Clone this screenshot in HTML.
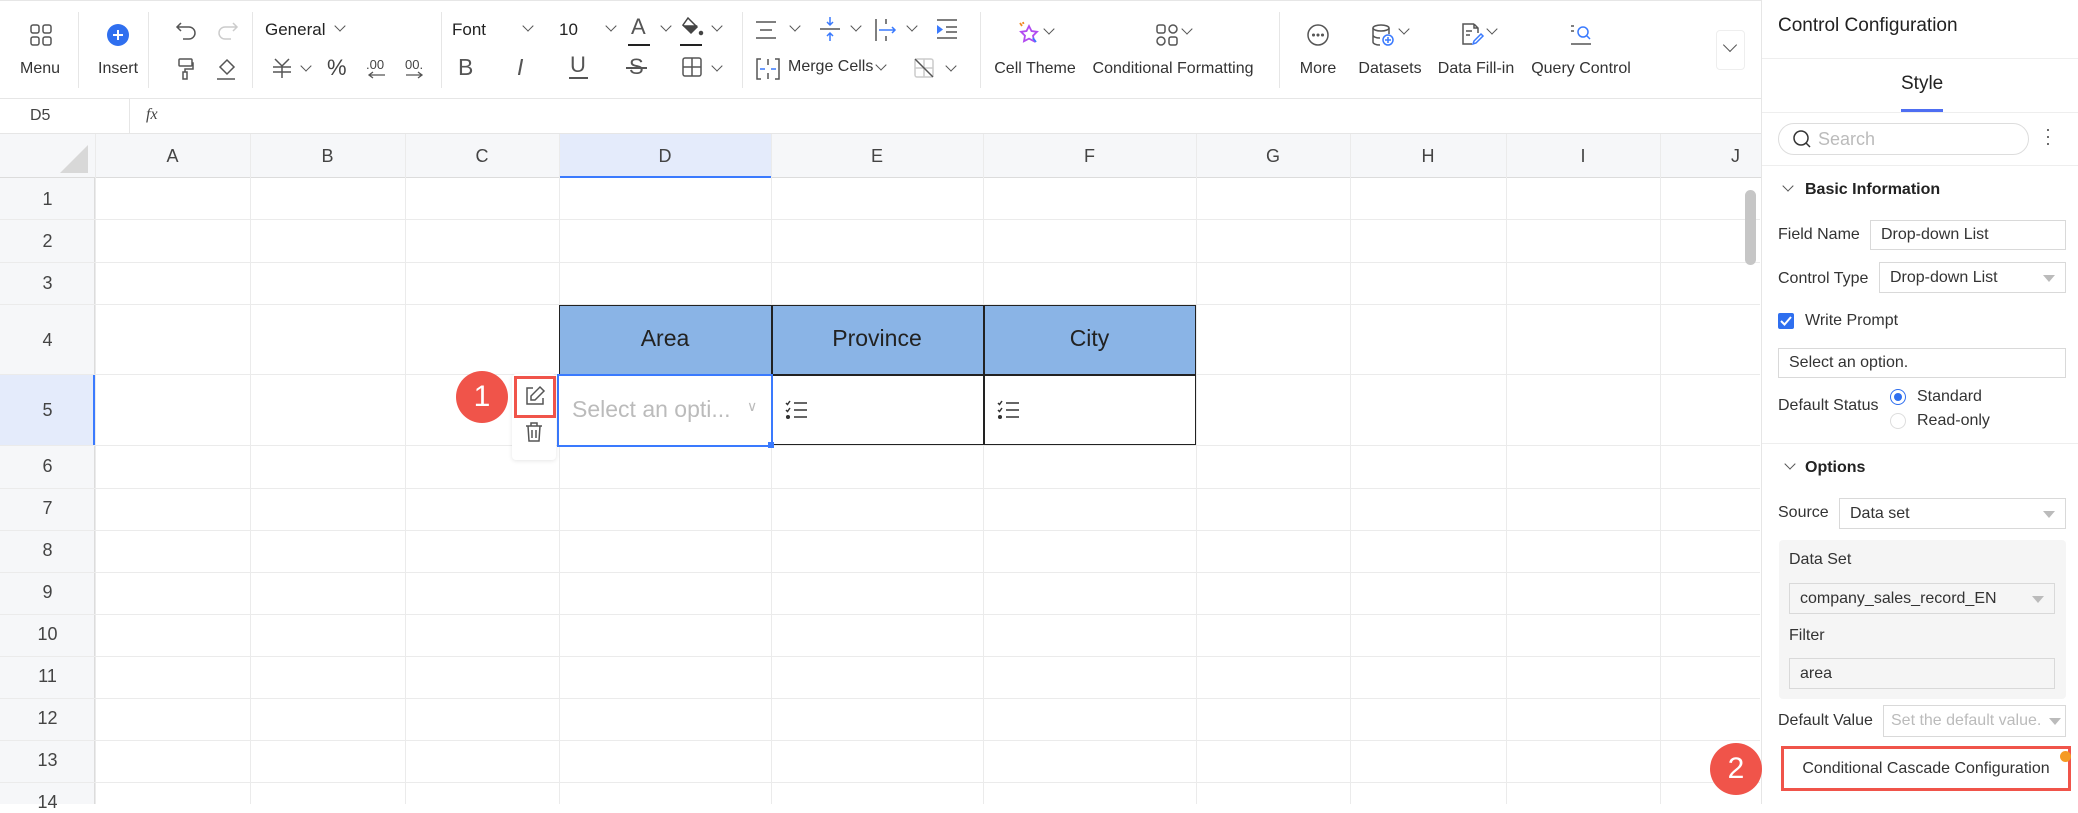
<!DOCTYPE html>
<html><head><meta charset="utf-8"><style>
*{box-sizing:border-box;margin:0;padding:0}
body{width:2078px;height:804px;overflow:hidden;background:#fff;font-family:"Liberation Sans",Arial,sans-serif;color:#333;position:relative}
.a{position:absolute}
.lbl{position:absolute;font-size:16px;color:#333;white-space:nowrap;transform:translateX(-50%)}
.vd{position:absolute;top:12px;width:1px;height:76px;background:#e6e6e6}
svg{position:absolute;overflow:visible}
.ch{position:absolute;width:8px;height:8px;border-right:1.5px solid #555;border-bottom:1.5px solid #555;transform:rotate(45deg)}
.hl{position:absolute;left:0;width:1760px;height:1px;background:#ebebeb}
.vl{position:absolute;top:134px;width:1px;height:670px;background:#ebebeb}
.ch-h{position:absolute;top:134px;height:44px;line-height:44px;text-align:center;font-size:18px;color:#444}
.rn{position:absolute;left:0;width:95px;text-align:center;font-size:18px;color:#444}
.p{position:absolute;font-size:16px;color:#333;white-space:nowrap}
.box{position:absolute;border:1px solid #d9d9d9;background:#fff;font-size:16px;color:#333;padding-left:10px;display:flex;align-items:center;white-space:nowrap}
.tri{position:absolute;right:10px;top:50%;margin-top:-3px;border-left:6px solid transparent;border-right:6px solid transparent;border-top:7px solid #bbb}
</style></head><body>

<!-- toolbar -->
<div class="a" style="left:0;top:0;width:1762px;height:99px;border-bottom:1px solid #e6e6e6;border-top:1px solid #e6e6e6"></div>
<svg style="left:30px;top:24px" width="22" height="22" fill="none" stroke="#555" stroke-width="1.5"><rect x="1" y="1" width="8" height="8" rx="2"/><rect x="13" y="1" width="8" height="8" rx="2"/><rect x="1" y="13" width="8" height="8" rx="2"/><rect x="13" y="13" width="8" height="8" rx="2"/></svg>
<div class="lbl" style="left:40px;top:60px">Menu</div>
<div class="vd" style="left:78px"></div>
<svg style="left:107px;top:24px" width="22" height="22"><circle cx="11" cy="11" r="11" fill="#2f6fef"/><path d="M11 6v10M6 11h10" stroke="#fff" stroke-width="2"/></svg>
<div class="lbl" style="left:118px;top:60px">Insert</div>
<div class="vd" style="left:148px"></div>
<svg style="left:176px;top:20px" width="22" height="20" fill="none" stroke="#555" stroke-width="1.5"><path d="M5 3L1 7l4 4M1 7h12a6 6 0 010 12H7"/></svg>
<svg style="left:216px;top:20px" width="22" height="20" fill="none" stroke="#ccc" stroke-width="1.5"><path d="M17 3l4 4-4 4M21 7H9a6 6 0 000 12h6"/></svg>
<svg style="left:178px;top:58px" width="16" height="22" fill="none" stroke="#555" stroke-width="1.5"><rect x="1" y="1" width="13" height="7" rx="1"/><path d="M14 5h1v6H7v3"/><rect x="5" y="14" width="4" height="7"/></svg>
<svg style="left:216px;top:58px" width="20" height="22" fill="none" stroke="#555" stroke-width="1.5"><path d="M11 2l7 7-7 7-7-7z"/><path d="M1 21h18"/></svg>
<div class="vd" style="left:252px"></div>
<div class="p" style="left:265px;top:20px;font-size:17px;color:#222">General</div>
<div class="ch" style="left:336px;top:22px"></div>
<svg style="left:272px;top:58px" width="20" height="20" fill="none" stroke="#555" stroke-width="1.5"><path d="M3 1l7 7 7-7M1 9h18M1 14h18M10 8v12"/></svg>
<div class="ch" style="left:302px;top:62px"></div>
<div class="p" style="left:327px;top:55px;font-size:22px;color:#444">%</div>
<div class="p" style="left:366px;top:57px;font-size:13px;color:#444">.00<br></div>
<svg style="left:366px;top:72px" width="20" height="6" fill="none" stroke="#555" stroke-width="1.3"><path d="M19 3H4M7 0L3 3l4 3"/></svg>
<div class="p" style="left:405px;top:57px;font-size:13px;color:#444">00.</div>
<svg style="left:405px;top:72px" width="20" height="6" fill="none" stroke="#555" stroke-width="1.3"><path d="M1 3h15M13 0l4 3-4 3"/></svg>
<div class="vd" style="left:441px"></div>
<div class="p" style="left:452px;top:20px;font-size:17px;color:#222">Font</div>
<div class="ch" style="left:524px;top:22px"></div>
<div class="p" style="left:559px;top:20px;font-size:17px;color:#222">10</div>
<div class="ch" style="left:607px;top:22px"></div>
<div class="p" style="left:631px;top:14px;font-size:22px;color:#555">A</div>
<div class="a" style="left:628px;top:44px;width:22px;height:2px;background:#222"></div>
<div class="ch" style="left:662px;top:22px"></div>
<svg style="left:680px;top:16px" width="24" height="22" fill="#444" stroke="#444" stroke-width="1.5"><path d="M8 2l9 9-6 6-8-8z" fill="none"/><path d="M4 10h12l-5 6z"/><circle cx="21" cy="17" r="1.5"/></svg>
<div class="a" style="left:680px;top:44px;width:22px;height:2px;background:#222"></div>
<div class="ch" style="left:713px;top:22px"></div>
<div class="p" style="left:458px;top:54px;font-size:23px;color:#555">B</div>
<div class="p" style="left:517px;top:54px;font-size:23px;color:#555;font-style:italic">I</div>
<div class="p" style="left:570px;top:52px;font-size:22px;color:#555">U</div>
<div class="a" style="left:569px;top:77px;width:19px;height:1.5px;background:#555"></div>
<div class="p" style="left:629px;top:54px;font-size:22px;color:#555">S</div>
<div class="a" style="left:626px;top:67px;width:21px;height:1.5px;background:#555"></div>
<svg style="left:682px;top:57px" width="20" height="20" fill="none" stroke="#555" stroke-width="1.5"><rect x="1" y="1" width="18" height="18" rx="2"/><path d="M10 1v18M1 10h18"/></svg>
<div class="ch" style="left:713px;top:62px"></div>
<div class="vd" style="left:742px"></div>
<svg style="left:755px;top:20px" width="22" height="20" stroke="#555" stroke-width="1.5"><path d="M1 2h20M5 10h12M1 18h20"/></svg>
<div class="ch" style="left:791px;top:22px"></div>
<svg style="left:819px;top:16px" width="22" height="26" fill="none" stroke-width="1.5"><path d="M1 13h20" stroke="#555"/><path d="M11 1v8M8 6l3 3 3-3M11 25v-8M8 20l3-3 3 3" stroke="#3a7afe"/></svg>
<div class="ch" style="left:852px;top:22px"></div>
<svg style="left:875px;top:18px" width="24" height="24" fill="none" stroke-width="1.5"><path d="M1 1v22M11 1v5M11 18v5" stroke="#555"/><path d="M4 12h16M17 9l3 3-3 3" stroke="#3a7afe"/></svg>
<div class="ch" style="left:908px;top:22px"></div>
<svg style="left:936px;top:18px" width="22" height="22" stroke="#555" stroke-width="1.5"><path d="M1 2h20M10 9h11M10 14h11M1 20h20"/><path d="M1 7l6 4.5-6 4.5z" fill="#3a7afe" stroke="none"/></svg>
<svg style="left:756px;top:58px" width="24" height="22" fill="none" stroke="#555" stroke-width="1.5"><path d="M5 1H1v20h4M19 1h4v20h-4M12 1v6M12 15v6"/><path d="M4 11h5M20 11h-5" stroke="#3a7afe"/></svg>
<div class="p" style="left:788px;top:58px;font-size:16px">Merge Cells</div>
<div class="ch" style="left:877px;top:61px"></div>
<svg style="left:914px;top:58px" width="20" height="20" fill="none" stroke="#ccc" stroke-width="1.5"><rect x="1" y="1" width="18" height="18" rx="2"/><path d="M10 1v18M1 10h18"/><path d="M1 1l18 18" stroke="#555"/></svg>
<div class="ch" style="left:947px;top:62px"></div>
<div class="vd" style="left:980px"></div>
<svg style="left:1018px;top:22px" width="22" height="22" fill="none" stroke-width="1.8"><path d="M11 4l2.5 5 5.5.8-4 3.9 1 5.5-5-2.6-5 2.6 1-5.5-4-3.9 5.5-.8z" stroke="#b24cf0"/><path d="M2 1l2 3M5 0l0.5 2" stroke="#f08a24"/><path d="M15 16l3 4" stroke="#3a7afe"/></svg>
<div class="ch" style="left:1045px;top:25px"></div>
<div class="lbl" style="left:1035px;top:60px">Cell Theme</div>
<svg style="left:1156px;top:24px" width="22" height="22" fill="none" stroke="#555" stroke-width="1.5"><rect x="1" y="1" width="8" height="8" rx="2"/><circle cx="17" cy="5" r="4"/><circle cx="5" cy="17" r="4"/><rect x="13" y="13" width="8" height="8" rx="2"/></svg>
<div class="ch" style="left:1183px;top:25px"></div>
<div class="lbl" style="left:1173px;top:60px">Conditional Formatting</div>
<div class="vd" style="left:1279px"></div>
<svg style="left:1307px;top:24px" width="22" height="22" fill="none" stroke="#555" stroke-width="1.5"><circle cx="11" cy="11" r="10"/><circle cx="6.5" cy="11" r=".8" fill="#555"/><circle cx="11" cy="11" r=".8" fill="#555"/><circle cx="15.5" cy="11" r=".8" fill="#555"/></svg>
<div class="lbl" style="left:1318px;top:60px">More</div>
<svg style="left:1372px;top:24px" width="24" height="22" fill="none" stroke="#555" stroke-width="1.5"><ellipse cx="9" cy="4" rx="8" ry="3"/><path d="M1 4v14c0 1.7 3 3 7 3M17 4v6M1 11c0 1.7 3 3 7 3"/><circle cx="16" cy="16" r="5" stroke="#3a7afe"/><path d="M16 13v6M13 16h6" stroke="#3a7afe"/></svg>
<div class="ch" style="left:1400px;top:25px"></div>
<div class="lbl" style="left:1390px;top:60px">Datasets</div>
<svg style="left:1460px;top:23px" width="24" height="22" fill="none" stroke="#555" stroke-width="1.5"><path d="M14 1H3v20h9M14 1l4 4v5M14 1v4h4M6 8h6M6 12h4"/><path d="M21 11l-7 7-1 3 3-1 7-7z" stroke="#3a7afe"/></svg>
<div class="ch" style="left:1488px;top:25px"></div>
<div class="lbl" style="left:1476px;top:60px">Data Fill-in</div>
<svg style="left:1570px;top:24px" width="22" height="22" fill="none" stroke-width="1.5"><path d="M1 2h3M1 7h3M1 20h20" stroke="#555"/><circle cx="13" cy="8" r="5" stroke="#3a7afe"/><path d="M17 12l3 3" stroke="#3a7afe"/></svg>
<div class="lbl" style="left:1581px;top:60px">Query Control</div>
<div class="a" style="left:1716px;top:30px;width:29px;height:40px;border:1px solid #eee;border-radius:4px"></div>
<div class="ch" style="left:1725px;top:40px;width:10px;height:10px"></div>

<!-- formula bar -->
<div class="a" style="left:0;top:99px;width:1762px;height:35px;border-bottom:1px solid #e6e6e6"></div>
<div class="p" style="left:30px;top:107px;color:#444">D5</div>
<div class="a" style="left:129px;top:99px;width:1px;height:35px;background:#e6e6e6"></div>
<div class="p" style="left:146px;top:106px;font-style:italic;font-family:'Liberation Serif',serif;color:#444">fx</div>

<!-- grid header -->
<div class="a" style="left:0;top:134px;width:1762px;height:44px;background:#f6f7f9;border-bottom:1px solid #dcdcdc"></div>
<div class="a" style="left:559px;top:134px;width:212px;height:44px;background:#e4ebfb;border-bottom:2px solid #3a7afe"></div>
<svg style="left:60px;top:145px" width="28" height="28"><path d="M28 0V28H0z" fill="#d8d8d8"/></svg>
<div class="a" style="left:0;top:374px;width:95px;height:71px;background:#e4ebfb;border-right:2px solid #3a7afe"></div>
<div class="a" style="left:0;top:178px;width:95px;height:626px;background:#f6f7f9;border-right:1px solid #dcdcdc;z-index:-1"></div>
<div class="ch-h" style="left:95px;width:155px">A</div>
<div class="ch-h" style="left:250px;width:155px">B</div>
<div class="ch-h" style="left:405px;width:154px">C</div>
<div class="ch-h" style="left:559px;width:212px">D</div>
<div class="ch-h" style="left:771px;width:212px">E</div>
<div class="ch-h" style="left:983px;width:213px">F</div>
<div class="ch-h" style="left:1196px;width:154px">G</div>
<div class="ch-h" style="left:1350px;width:156px">H</div>
<div class="ch-h" style="left:1506px;width:154px">I</div>
<div class="ch-h" style="left:1660px;width:102px;text-align:right;padding-right:22px">J</div>
<div class="vl" style="left:95px"></div><div class="vl" style="left:250px"></div><div class="vl" style="left:405px"></div><div class="vl" style="left:559px"></div><div class="vl" style="left:771px"></div><div class="vl" style="left:983px"></div><div class="vl" style="left:1196px"></div><div class="vl" style="left:1350px"></div><div class="vl" style="left:1506px"></div><div class="vl" style="left:1660px"></div>
<div class="hl" style="top:219px"></div><div class="hl" style="top:262px"></div><div class="hl" style="top:304px"></div><div class="hl" style="top:374px"></div><div class="hl" style="top:445px"></div><div class="hl" style="top:488px"></div><div class="hl" style="top:530px"></div><div class="hl" style="top:572px"></div><div class="hl" style="top:614px"></div><div class="hl" style="top:656px"></div><div class="hl" style="top:698px"></div><div class="hl" style="top:740px"></div><div class="hl" style="top:782px"></div>
<div class="rn" style="top:189px">1</div><div class="rn" style="top:231px">2</div><div class="rn" style="top:273px">3</div><div class="rn" style="top:330px">4</div><div class="rn" style="top:400px">5</div><div class="rn" style="top:456px">6</div><div class="rn" style="top:498px">7</div><div class="rn" style="top:540px">8</div><div class="rn" style="top:582px">9</div><div class="rn" style="top:624px">10</div><div class="rn" style="top:666px">11</div><div class="rn" style="top:708px">12</div><div class="rn" style="top:750px">13</div><div class="rn" style="top:792px">14</div>
<div class="a" style="left:1745px;top:190px;width:11px;height:75px;background:#c6c6c6;border-radius:6px"></div>

<!-- table -->
<div class="a" style="left:559px;top:305px;width:637px;height:140px;border:1.5px solid #222"></div>
<div class="a" style="left:560px;top:306px;width:635px;height:68px;background:#8ab4e6"></div>
<div class="a" style="left:559px;top:374px;width:637px;height:1.5px;background:#222"></div>
<div class="a" style="left:771px;top:305px;width:1.5px;height:140px;background:#222"></div>
<div class="a" style="left:983px;top:305px;width:1.5px;height:140px;background:#222"></div>
<div class="p" style="left:559px;top:325px;width:212px;text-align:center;font-size:23px;color:#222">Area</div>
<div class="p" style="left:771px;top:325px;width:212px;text-align:center;font-size:23px;color:#222">Province</div>
<div class="p" style="left:983px;top:325px;width:213px;text-align:center;font-size:23px;color:#222">City</div>
<div class="a" style="left:557px;top:374px;width:216px;height:73px;border:2px solid #3a7afe;background:#fff"></div>
<div class="a" style="left:768px;top:442px;width:6px;height:6px;background:#3a7afe"></div>
<div class="p" style="left:572px;top:396px;font-size:23px;color:#bbb">Select an opti...</div>
<div class="p" style="left:747px;top:398px;font-size:14px;color:#bbb">∨</div>
<svg style="left:785px;top:400px" width="24" height="20" stroke="#333" stroke-width="1.5" fill="none"><path d="M1 3l1.5 1.5L5 1M1 10l1.5 1.5L5 8M9 3h13M9 10h13M9 17h13"/><circle cx="3" cy="17" r="1.3" fill="#333"/></svg>
<svg style="left:997px;top:400px" width="24" height="20" stroke="#333" stroke-width="1.5" fill="none"><path d="M1 3l1.5 1.5L5 1M1 10l1.5 1.5L5 8M9 3h13M9 10h13M9 17h13"/><circle cx="3" cy="17" r="1.3" fill="#333"/></svg>
<div class="a" style="left:512px;top:374px;width:44px;height:86px;background:#fff;border-radius:4px;box-shadow:0 1px 4px rgba(0,0,0,.1)"></div>
<div class="a" style="left:514px;top:376px;width:42px;height:42px;border:3px solid #f0544a"></div>
<svg style="left:525px;top:386px" width="20" height="20" fill="none" stroke="#555" stroke-width="1.5"><path d="M8 2H2v16h16v-6"/><path d="M15 1l4 4-9 9H6v-4z"/></svg>
<svg style="left:525px;top:422px" width="18" height="20" fill="none" stroke="#555" stroke-width="1.5"><path d="M1 4h16M6 4V1h6v3M3 4l1 15h10l1-15M7 8v8M11 8v8"/></svg>
<div class="a" style="left:456px;top:371px;width:52px;height:52px;border-radius:50%;background:#f0544a;color:#fff;font-size:30px;line-height:52px;text-align:center">1</div>

<!-- panel -->
<div class="a" style="left:1761px;top:0;width:1px;height:804px;background:#e6e6e6"></div>
<div class="p" style="left:1778px;top:15px;font-size:19px;color:#222">Control Configuration</div>
<div class="a" style="left:1762px;top:58px;width:316px;height:1px;background:#eee"></div>
<div class="p" style="left:1901px;top:73px;font-size:19px;color:#222">Style</div>
<div class="a" style="left:1901px;top:109px;width:42px;height:3px;background:#4e6ef2"></div>
<div class="a" style="left:1762px;top:112px;width:316px;height:1px;background:#eee"></div>
<div class="a" style="left:1778px;top:123px;width:251px;height:32px;border:1px solid #ddd;border-radius:16px"></div>
<svg style="left:1793px;top:130px" width="18" height="18" fill="none" stroke="#333" stroke-width="1.5"><circle cx="8" cy="8" r="7"/><path d="M13 13l4 4"/></svg>
<div class="p" style="left:1818px;top:129px;font-size:18px;color:#bbb">Search</div>
<div class="p" style="left:2045px;top:126px;font-size:18px;color:#555;line-height:7px">·<br>·<br>·</div>
<div class="a" style="left:1762px;top:165px;width:316px;height:1px;background:#eee"></div>
<div class="ch" style="left:1784px;top:182px"></div>
<div class="p" style="left:1805px;top:181px;font-weight:bold;color:#222">Basic Information</div>
<div class="p" style="left:1778px;top:226px">Field Name</div>
<div class="box" style="left:1870px;top:220px;width:196px;height:30px">Drop-down List</div>
<div class="p" style="left:1778px;top:270px">Control Type</div>
<div class="box" style="left:1879px;top:262px;width:187px;height:31px">Drop-down List<span class="tri"></span></div>
<div class="a" style="left:1778px;top:313px;width:16px;height:16px;background:#2f6fef;border-radius:2px"></div>
<svg style="left:1780px;top:315px" width="12" height="12" fill="none" stroke="#fff" stroke-width="2"><path d="M1 6l3.5 3.5L11 2"/></svg>
<div class="p" style="left:1805px;top:312px">Write Prompt</div>
<div class="box" style="left:1778px;top:348px;width:288px;height:30px">Select an option.</div>
<div class="p" style="left:1778px;top:397px">Default Status</div>
<div class="a" style="left:1890px;top:389px;width:16px;height:16px;border:1.5px solid #2f6fef;border-radius:50%"></div>
<div class="a" style="left:1894px;top:393px;width:8px;height:8px;background:#2f6fef;border-radius:50%"></div>
<div class="p" style="left:1917px;top:388px">Standard</div>
<div class="a" style="left:1890px;top:413px;width:16px;height:16px;border:1px solid #ddd;border-radius:50%"></div>
<div class="p" style="left:1917px;top:412px">Read-only</div>
<div class="a" style="left:1762px;top:443px;width:316px;height:1px;background:#eee"></div>
<div class="ch" style="left:1786px;top:460px"></div>
<div class="p" style="left:1805px;top:459px;font-weight:bold;color:#222">Options</div>
<div class="p" style="left:1778px;top:504px">Source</div>
<div class="box" style="left:1839px;top:498px;width:227px;height:31px">Data set<span class="tri"></span></div>
<div class="a" style="left:1779px;top:540px;width:287px;height:159px;background:#f5f5f5;border-radius:4px"></div>
<div class="p" style="left:1789px;top:551px">Data Set</div>
<div class="box" style="left:1789px;top:583px;width:266px;height:31px;background:#f5f5f5">company_sales_record_EN<span class="tri"></span></div>
<div class="p" style="left:1789px;top:627px">Filter</div>
<div class="box" style="left:1789px;top:658px;width:266px;height:31px;background:#f5f5f5">area</div>
<div class="p" style="left:1778px;top:712px">Default Value</div>
<div class="box" style="left:1883px;top:705px;width:183px;height:32px;color:#bbb;padding-left:7px;overflow:hidden">Set the default value.<span class="tri" style="right:4px"></span></div>
<div class="a" style="left:1781px;top:746px;width:290px;height:45px;border:3px solid #f0544a;background:#fff;font-size:16px;color:#333;text-align:center;line-height:39px">Conditional Cascade Configuration</div>
<div class="a" style="left:2060px;top:751px;width:11px;height:11px;border-radius:50%;background:#f59a23"></div>
<div class="a" style="left:1710px;top:743px;width:52px;height:52px;border-radius:50%;background:#f0544a;color:#fff;font-size:30px;line-height:52px;text-align:center">2</div>
</body></html>
